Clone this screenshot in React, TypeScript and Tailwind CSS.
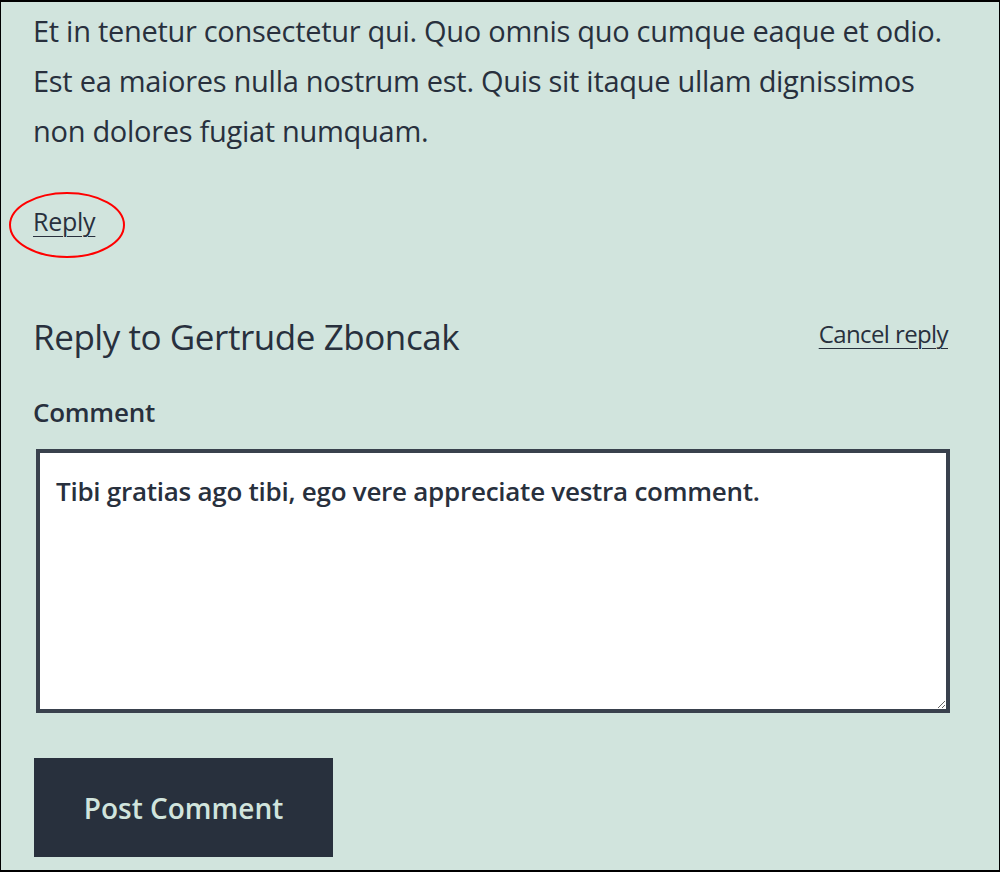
import React, { useState } from "react";

export default function App() {
  const [comment, setComment] = useState(
    "Tibi gratias ago tibi, ego vere appreciate vestra comment."
  );

  return (
    <div className="w-[1000px] h-[872px] overflow-hidden bg-[#d1e4dd] border-black border-x border-t-2 border-b-2 text-[#28303d] font-['Open_Sans',sans-serif]">
      <div className="relative pl-[32px] pr-[49px] pt-[4px]">
        {/* comment body */}
        <p className="text-[29px] leading-[50px] tracking-[-0.01em]">
          <span className="block whitespace-nowrap">
            Et in tenetur consectetur qui. Quo omnis quo cumque eaque et odio.
          </span>
          <span className="block whitespace-nowrap">
            Est ea maiores nulla nostrum est. Quis sit itaque ullam dignissimos
          </span>
          <span className="block whitespace-nowrap">non dolores fugiat numquam.</span>
        </p>

        <div className="mt-[45px] text-[25px] leading-[40px] tracking-[-0.01em]">
          <a href="#" className="underline underline-offset-[5px] decoration-1">
            Reply
          </a>
        </div>

        {/* annotation around the reply link */}
        <svg
          className="absolute left-[8px] top-[189px] pointer-events-none"
          width="118"
          height="70"
          viewBox="0 0 118 70"
        >
          <ellipse cx="58" cy="34" rx="57" ry="32" fill="none" stroke="#f00" strokeWidth="2" />
        </svg>

        <div className="mt-[72px] flex items-start justify-between">
          <h3 className="text-[35px] leading-[48px] font-normal tracking-[-0.0125em]">
            Reply to Gertrude Zboncak
          </h3>
          <a
            href="#"
            className="mt-[1px] mr-[2px] text-[24px] leading-[40px] tracking-[-0.025em] underline underline-offset-[5px] decoration-1"
          >
            Cancel reply
          </a>
        </div>

        <form className="flex flex-col items-start" onSubmit={(e) => e.preventDefault()}>
          <label
            htmlFor="comment"
            className="mt-[31px] text-[26px] leading-[40px] font-semibold tracking-[-0.01em]"
          >
            Comment
          </label>
          <textarea
            id="comment"
            value={comment}
            onChange={(e) => setComment(e.target.value)}
            className="mt-[17px] ml-[3px] w-[914px] h-[264px] bg-white border-4 border-[#39414d] px-[16px] py-[15px] text-[26px] leading-[46px] font-semibold tracking-[-0.01em] text-[#28303d] outline-none"
          />
          <button
            type="submit"
            className="mt-[45px] ml-[1px] w-[299px] h-[99px] bg-[#28303d] text-[#d1e4dd] text-[28px] font-semibold"
          >
            Post Comment
          </button>
        </form>
      </div>
    </div>
  );
}
